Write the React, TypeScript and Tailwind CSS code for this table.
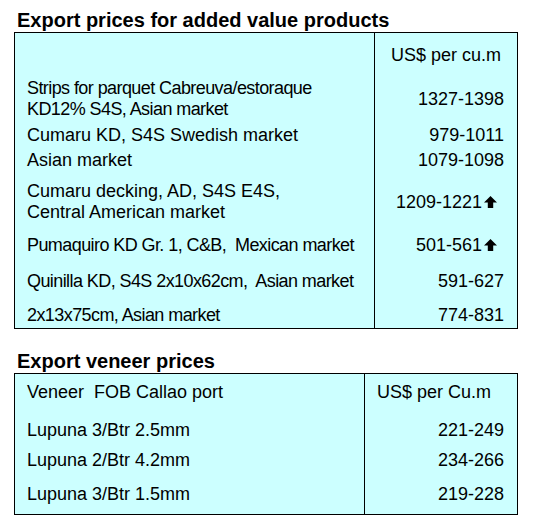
const UpArrow = () => (
  <svg width="13" height="12" viewBox="0 0 12 11" className="mb-[1px]">
    <path d="M6 0 L12 6 L8.5 6 L8.5 11 L3.5 11 L3.5 6 L0 6 Z" fill="#000" />
  </svg>
);

interface RowProps {
  left: React.ReactNode;
  right: React.ReactNode;
  pt: string;
  leftW: string;
  rightCls?: string;
  last?: string;
}

const Row = ({ left, right, pt, leftW, rightCls = "justify-end pr-[13px]", last = "" }: RowProps) => (
  <div className="flex">
    <div className={`${leftW} ${pt} ${last} pl-[12px]`}>{left}</div>
    <div className={`flex-1 border-l border-black flex items-center ${pt} ${last} ${rightCls}`}>{right}</div>
  </div>
);

export default function App() {
  const w1 = "w-[359px] shrink-0";
  const w2 = "w-[349px] shrink-0";
  const arrow = "justify-end gap-[2px] pr-[20px]";
  // these lines are set tighter in the source
  const tight = "tracking-[-0.58px]";

  return (
    <div className="w-[535px] h-[521px] bg-white text-black font-['Liberation_Sans',Arial,sans-serif] text-[18px] leading-[21px] overflow-hidden">
      <h2 className="mt-[10px] ml-[17px] text-[20px] leading-[20px] font-bold">Export prices for added value products</h2>
      <div className="mt-[2px] ml-[14px] w-[504px] border border-black bg-[#ccffff]">
        <Row leftW={w1} pt="pt-[12px]" left={<span>&nbsp;</span>} right={<span>US$ per cu.m</span>} rightCls="justify-center" />
        <Row
          leftW={w1}
          pt="pt-[12px]"
          left={
            <div className={tight}>
              <div>Strips for parquet Cabreuva/estoraque</div>
              <div>KD12% S4S, Asian market</div>
            </div>
          }
          right={<span>1327-1398</span>}
        />
        <Row leftW={w1} pt="pt-[5px]" left="Cumaru KD, S4S Swedish market" right={<span>979-1011</span>} />
        <Row leftW={w1} pt="pt-[4px]" left="Asian market" right={<span>1079-1098</span>} />
        <Row
          leftW={w1}
          pt="pt-[10px]"
          left={
            <>
              <div>Cumaru decking, AD, S4S E4S,</div>
              <div>Central American market</div>
            </>
          }
          right={
            <>
              <span>1209-1221</span>
              <UpArrow />
            </>
          }
          rightCls={arrow}
        />
        <Row
          leftW={w1}
          pt="pt-[12px]"
          left={<span className={`${tight} whitespace-pre`}>Pumaquiro KD Gr. 1, C&amp;B,  Mexican market</span>}
          right={
            <>
              <span>501-561</span>
              <UpArrow />
            </>
          }
          rightCls={arrow}
        />
        <Row
          leftW={w1}
          pt="pt-[15px]"
          left={<span className={`${tight} whitespace-pre`}>Quinilla KD, S4S 2x10x62cm,  Asian market</span>}
          right={<span>591-627</span>}
        />
        <Row
          leftW={w1}
          pt="pt-[13px]"
          last="pb-[2px]"
          left={<span className={tight}>2x13x75cm, Asian market</span>}
          right={<span>774-831</span>}
        />
      </div>

      <h2 className="mt-[22px] ml-[17px] text-[20px] leading-[20px] font-bold">Export veneer prices</h2>
      <div className="mt-[2px] ml-[14px] w-[504px] border border-black bg-[#ccffff]">
        <Row
          leftW={w2}
          pt="pt-[8px]"
          left={<span className="whitespace-pre">Veneer  FOB Callao port</span>}
          right={<span>US$ per Cu.m</span>}
          rightCls="justify-start pl-[12px]"
        />
        <Row leftW={w2} pt="pt-[17px]" left="Lupuna 3/Btr 2.5mm" right={<span>221-249</span>} />
        <Row leftW={w2} pt="pt-[9px]" left="Lupuna 2/Btr 4.2mm" right={<span>234-266</span>} />
        <Row leftW={w2} pt="pt-[13px]" last="pb-[9px]" left="Lupuna 3/Btr 1.5mm" right={<span>219-228</span>} />
      </div>
    </div>
  );
}
